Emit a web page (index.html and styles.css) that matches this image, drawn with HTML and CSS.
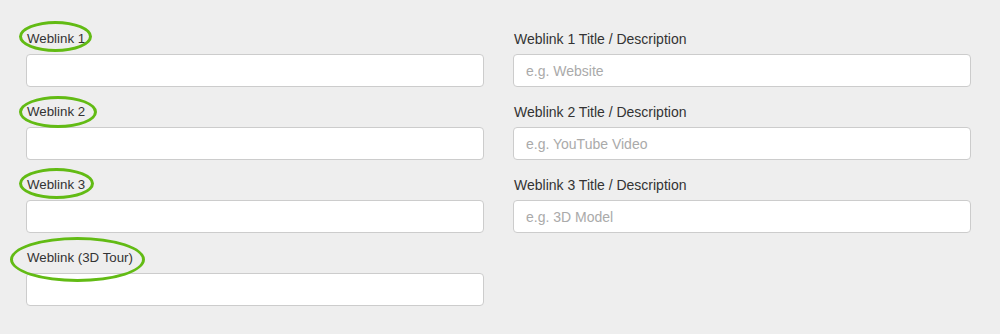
FILE: index.html
```html
<!DOCTYPE html>
<html lang="en">
<head>
    <meta charset="UTF-8">
    <title>Weblinks</title>
    <link rel="stylesheet" href="styles.css">
</head>
<body>
<div class="links">
    <div class="column">
        <div class="field">
            <label for="link1"><span class="mark mark-1">Weblink 1</span></label>
            <input type="text" id="link1">
        </div>
        <div class="field">
            <label for="link2"><span class="mark mark-2">Weblink 2</span></label>
            <input type="text" id="link2">
        </div>
        <div class="field">
            <label for="link3"><span class="mark mark-3">Weblink 3</span></label>
            <input type="text" id="link3">
        </div>
        <div class="field">
            <label for="link4"><span class="mark mark-4">Weblink (3D Tour)</span></label>
            <input type="text" id="link4">
        </div>
    </div>
    <div class="column">
        <div class="field">
            <label for="title1">Weblink 1 Title / Description</label>
            <input type="text" id="title1" placeholder="e.g. Website">
        </div>
        <div class="field">
            <label for="title2">Weblink 2 Title / Description</label>
            <input type="text" id="title2" placeholder="e.g. YouTube Video">
        </div>
        <div class="field">
            <label for="title3">Weblink 3 Title / Description</label>
            <input type="text" id="title3" placeholder="e.g. 3D Model">
        </div>
    </div>
</div>
</body>
</html>
```

FILE: styles.css
```css
body {
    margin: 0;
    background: #eeeeee;
    font-family: "Liberation Sans", Arial, sans-serif;
    font-size: 14px;
    color: #333;
}
.links {
    display: flex;
    gap: 29px;
    padding: 30px 0 0 26px;
}
.column {
    width: 458px;
}
.field {
    margin-bottom: 16px;
}
label {
    display: block;
    height: 18px;
    line-height: 18px;
    margin-bottom: 6px;
    padding-left: 1px;
}
input[type="text"] {
    display: block;
    box-sizing: border-box;
    width: 100%;
    height: 33px;
    padding: 0 12px;
    border: 1px solid #cccccc;
    border-radius: 4px;
    background: #fff;
    font-family: inherit;
    font-size: 14px;
    color: #333;
}
input::placeholder {
    color: #aaa;
}
.mark {
    position: relative;
    display: inline-block;
    vertical-align: top;
    line-height: 18px;
    font-size: 13.3px;
}
.mark::before {
    content: "";
    position: absolute;
    border: 3.5px solid #62bb14;
    border-radius: 50%;
    top: -9px;
    bottom: -4px;
    left: -8px;
    right: -7px;
}
.mark-2::before {
    top: -7px;
    bottom: -7px;
    left: -8px;
    right: -12px;
}
.mark-3::before {
    top: -8px;
    bottom: -5px;
    left: -8px;
    right: -9px;
}
.mark-4::before {
    top: -12px;
    bottom: -15px;
    left: -17px;
    right: -12px;
}
```
